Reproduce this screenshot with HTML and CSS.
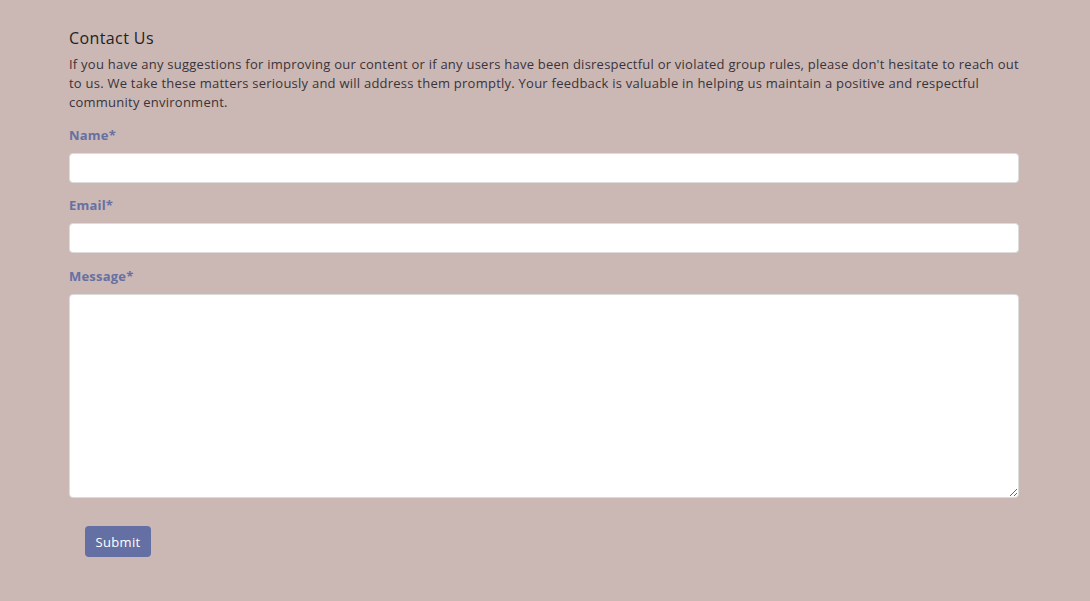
FILE: index.html
```html
<!DOCTYPE html>
<html>
<head>
<meta charset="utf-8">
<link rel="stylesheet" href="styles.css">
</head>
<body>
<main class="contact">
  <h2 class="title">Contact Us</h2>
  <p class="intro">If you have any suggestions for improving our content or if any users have been disrespectful or violated group rules, please don't hesitate to reach out to us. We take these matters seriously and will address them promptly. Your feedback is valuable in helping us maintain a positive and respectful community environment.</p>
  <form class="form">
    <label class="label" for="name">Name*</label>
    <input class="field" id="name" type="text">
    <label class="label label-tight" for="email">Email*</label>
    <input class="field" id="email" type="email">
    <label class="label" for="msg">Message*</label>
    <textarea class="field area" id="msg"></textarea>
    <div class="actions"><button class="submit" type="button">Submit</button></div>
  </form>
</main>
</body>
</html>
```
FILE: styles.css
```css
html, body { margin: 0; padding: 0; }
body {
  background: #cbb8b5;
  font-family: "Open Sans", "Liberation Sans", sans-serif;
  color: #333;
  height: 601px;
}
.contact {
  width: 950px;
  margin: 0 0 0 69px;
  padding-top: 28px;
}
.title {
  margin: 0 0 7px;
  font-size: 16px;
  font-weight: 400;
  line-height: 20px;
  color: #222;
  letter-spacing: 0.4px;
}
.intro {
  margin: 0;
  font-size: 13px;
  line-height: 19px;
  color: #3a3338;
  letter-spacing: 0.24px;
}
.form { display: flex; flex-direction: column; }
.label {
  font-size: 13px;
  font-weight: 700;
  color: #6670a2;
  line-height: 18px;
  margin-top: 14px;
  margin-bottom: 9px;
  letter-spacing: 0.2px;
}
.label-tight { margin-top: 13px; }
.field {
  box-sizing: border-box;
  width: 950px;
  height: 30px;
  border: 1px solid #dcdcdc;
  border-radius: 4px;
  background: #fff;
  margin: 0;
  font: inherit;
}
.area { height: 204px; resize: vertical; }
.actions { padding: 28px 0 0 16px; }
.submit {
  background: #6470a3;
  color: #fff;
  border: none;
  border-radius: 4px;
  height: 31px;
  width: 66px;
  font-family: inherit;
  font-size: 13px;
  letter-spacing: 0.3px;
  padding: 0;
}
```
